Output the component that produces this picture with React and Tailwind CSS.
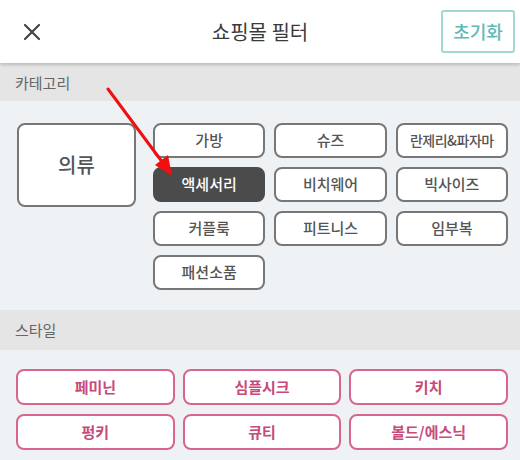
import React from "react";

const categories = [
  { label: "가방" },
  { label: "슈즈" },
  { label: "란제리&파자마", small: true },
  { label: "액세서리", active: true },
  { label: "비치웨어" },
  { label: "빅사이즈" },
  { label: "커플룩" },
  { label: "피트니스" },
  { label: "임부복" },
  { label: "패션소품" },
];

const styles = ["페미닌", "심플시크", "키치", "펑키", "큐티", "볼드/에스닉"];

const App = () => {
  return (
    <div
      className="relative w-[520px] h-[460px] overflow-hidden bg-[#eff2f5]"
      style={{ fontFamily: '"Noto Sans CJK KR", "Noto Sans", sans-serif' }}
    >
      {/* 상단 헤더 */}
      <header className="relative z-10 h-[63px] bg-white flex items-center shadow-[0_2px_3px_rgba(0,0,0,0.18)]">
        <button className="ml-[20px] w-[24px] h-[24px] flex items-center justify-center text-[#444]">
          <svg width="20" height="20" viewBox="0 0 20 20" fill="none" stroke="currentColor" strokeWidth="2.2" strokeLinecap="round">
            <path d="M3 3 L17 17 M17 3 L3 17" />
          </svg>
        </button>
        <h1 className="absolute left-0 right-0 text-center text-[20px] text-[#3a3a3a] font-normal pointer-events-none">
          쇼핑몰 필터
        </h1>
        <button className="ml-auto mr-[5px] w-[74px] h-[43px] border-2 border-[#9fd8d4] rounded-[3px] text-[18px] text-[#5fbab5] font-medium">
          초기화
        </button>
      </header>

      {/* 카테고리 */}
      <div className="h-[38px] bg-[#e5e5e5] flex items-center pl-[15px] pt-[3px] text-[15px] text-[#666]">
        카테고리
      </div>
      <div className="flex pt-[22px] pb-[20px] pl-[17px] pr-[12px]">
        <button className="w-[119px] h-[84px] shrink-0 bg-white border-2 border-[#777] rounded-[8px] text-[20px] font-medium text-[#555]">
          의류
        </button>
        <div className="ml-[17px] flex-1 grid grid-cols-3 gap-x-[9px] gap-y-[9px]">
          {categories.map((c) => (
            <button
              key={c.label}
              className={`h-[35px] rounded-[8px] border-2 font-medium ${
                c.active
                  ? "bg-[#4b4b4b] border-[#4b4b4b] text-white"
                  : "bg-white border-[#777] text-[#555]"
              } ${c.small ? "text-[14px] tracking-[-0.5px]" : "text-[15px]"}`}
            >
              {c.label}
            </button>
          ))}
        </div>
      </div>

      {/* 스타일 */}
      <div className="h-[40px] bg-[#e5e5e5] flex items-center pl-[15px] text-[15px] text-[#666]">
        스타일
      </div>
      <div className="grid grid-cols-3 gap-x-[8px] gap-y-[9px] pt-[19px] pl-[16px] pr-[12px]">
        {styles.map((s) => (
          <button
            key={s}
            className="h-[36px] bg-white border-2 border-[#d8648f] rounded-[8px] text-[15px] font-bold text-[#c8497b]"
          >
            {s}
          </button>
        ))}
      </div>

      {/* 빨간 화살표 주석 */}
      <svg className="absolute left-0 top-0 z-20 pointer-events-none" width="520" height="460">
        <line x1="108" y1="89" x2="163" y2="163" stroke="#f01010" strokeWidth="3" strokeLinecap="round" />
        <polygon points="172,176 155,165 168,155" fill="#f01010" />
      </svg>
    </div>
  );
};

export default App;
